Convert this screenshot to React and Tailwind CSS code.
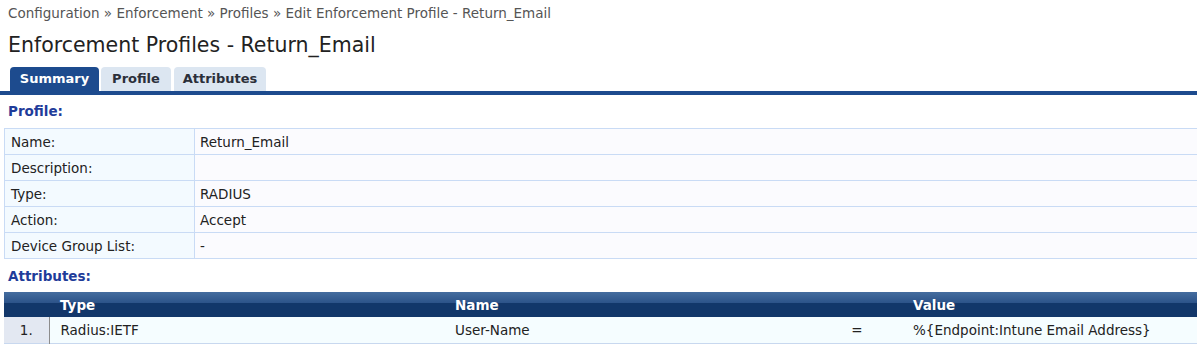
import React from "react";

const profileRows = [
  ["Name:", "Return_Email"],
  ["Description:", ""],
  ["Type:", "RADIUS"],
  ["Action:", "Accept"],
  ["Device Group List:", "-"],
];

export default function App() {
  return (
    <div className="w-[1197px] h-[352px] overflow-hidden bg-white font-['DejaVu_Sans',Verdana,sans-serif] text-[13.5px] text-[#222]">
      <div className="px-2 pt-[5px] leading-[16px] text-[#555]">
        Configuration » Enforcement » Profiles » Edit Enforcement Profile - Return_Email
      </div>
      <h1 className="px-2 mt-[12px] text-[20.5px] leading-[24px] text-[#222] font-normal">
        Enforcement Profiles - Return_Email
      </h1>
      <div className="mt-[10px] flex items-end gap-[2px] pl-[10px] border-b-4 border-[#1d4b8e] text-[13px]">
        <div className="h-[24px] w-[89px] flex items-center justify-center rounded-t-[4px] bg-[#1d4b8e] text-white font-bold">
          Summary
        </div>
        <div className="h-[24px] w-[70px] flex items-center justify-center rounded-t-[4px] bg-[#dce6f1] text-[#2b2f3a] font-bold">
          Profile
        </div>
        <div className="h-[24px] w-[92px] flex items-center justify-center rounded-t-[4px] bg-[#dce6f1] text-[#2b2f3a] font-bold ml-[1px]">
          Attributes
        </div>
      </div>

      <div className="px-2 pt-[8px] leading-[16px] font-bold text-[#1f3c9a]">Profile:</div>
      <div className="pl-[4px] mt-[9px]">
        <table className="w-[1200px] border-collapse">
          <tbody>
            {profileRows.map(([k, v]) => (
              <tr key={k} className="h-[26px]">
                <td className="w-[190px] border border-[#c9dbf5] bg-[#f3faff] pl-[6px] py-0 leading-[16px]">{k}</td>
                <td className="border border-[#c9dbf5] bg-[#fbfbfe] pl-[5px] py-0 leading-[16px]">{v}</td>
              </tr>
            ))}
          </tbody>
        </table>
      </div>

      <div className="px-2 pt-[9px] leading-[16px] font-bold text-[#1f3c9a]">Attributes:</div>
      <div className="pl-[4px] mt-[8px]">
        <table className="w-[1200px] border-collapse leading-[16px]">
          <thead>
            <tr className="h-[25px] bg-[linear-gradient(to_bottom,#456d9f_0%,#2c5389_44%,#12376a_46%,#12376a_100%)] text-white font-bold text-left">
              <th className="w-[45px] p-0"></th>
              <th className="w-[396px] pl-[11px] p-0 font-bold">Type</th>
              <th className="w-[395px] pl-[10px] p-0 font-bold">Name</th>
              <th className="w-[34px] p-0"></th>
              <th className="pl-[39px] p-0 font-bold">Value</th>
            </tr>
          </thead>
          <tbody>
            <tr className="h-[26px] border-b border-[#c8d8ef]">
              <td className="bg-[#e3e8f2] border-r border-[#8c8c8c] text-center p-0">1.</td>
              <td className="bg-[#f5fdff] pl-[11px] p-0">Radius:IETF</td>
              <td className="bg-[#f5fdff] pl-[10px] p-0">User-Name</td>
              <td className="bg-[#f5fdff] text-center p-0">=</td>
              <td className="bg-[#f5fdff] pl-[39px] p-0">%&#123;Endpoint:Intune Email Address&#125;</td>
            </tr>
          </tbody>
        </table>
      </div>
    </div>
  );
}
